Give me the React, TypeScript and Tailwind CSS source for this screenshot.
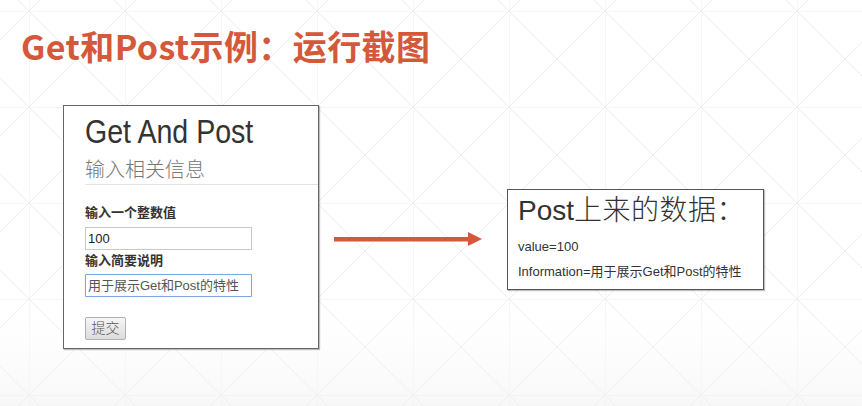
import React from "react";

const sans = { fontFamily: '"Liberation Sans", "Noto Sans CJK SC", Arial, sans-serif' };

function Background() {
  return (
    <svg className="absolute inset-0" width="862" height="406" aria-hidden="true">
      <defs>
        <pattern id="grid" x="29" y="11" width="96" height="96" patternUnits="userSpaceOnUse">
          <path d="M0 0H96M0 0V96M0 0L96 96M96 0L0 96" stroke="#ededed" strokeWidth="1" fill="none" />
        </pattern>
        <linearGradient id="fade" x1="0" y1="0" x2="0" y2="1">
          <stop offset="0" stopColor="#ffffff" stopOpacity="0" />
          <stop offset="1" stopColor="#f2f2f2" stopOpacity="1" />
        </linearGradient>
      </defs>
      <rect width="862" height="406" fill="#ffffff" />
      <rect width="862" height="406" fill="url(#grid)" />
      <rect y="290" width="862" height="116" fill="url(#fade)" opacity="0.6" />
    </svg>
  );
}

function Arrow() {
  return (
    <svg width="148" height="14" viewBox="0 0 148 14" className="shrink-0">
      <rect x="0" y="5" width="136" height="4.5" fill="#d5583c" />
      <polygon points="134,0 148,7 134,14" fill="#d5583c" />
    </svg>
  );
}

export default function App() {
  return (
    <div className="relative w-[862px] h-[406px] overflow-hidden bg-white" style={sans}>
      <Background />
      <div className="relative flex flex-col">
        <h1
          className="mt-[25px] ml-[21px] h-[41px] leading-[41px] text-[34px] font-bold text-[#d4583a] whitespace-nowrap tracking-[0.4px]"
          style={{ fontFamily: '"Noto Sans CJK SC", "Noto Sans", sans-serif' }}
        >
          Get和Post示例：运行截图
        </h1>
        <div className="mt-[39px] flex items-start">
          <div className="ml-[63px] w-[256px] h-[244px] shrink-0 border border-[#666] bg-white shadow-[1px_1px_1px_rgba(0,0,0,0.25)] flex flex-col">
            <div className="mt-[8px] ml-[21px] h-[34px] leading-[34px] text-[34px] text-[#333] whitespace-nowrap origin-left scale-x-[0.84]">
              Get And Post
            </div>
            <div className="mt-[12px] ml-[21px] h-[20px] leading-[20px] text-[20px] font-light text-[#777]">输入相关信息</div>
            <div className="mt-[4px] ml-[21px] h-px bg-[#e3e3e3]" />
            <div className="mt-[21px] ml-[21px] h-[13px] leading-[13px] text-[13px] font-bold text-[#333]">输入一个整数值</div>
            <div className="mt-[8px] ml-[21px] w-[167px] h-[23px] border border-[#c8c8c8] bg-white flex items-center px-[2px] text-[13px] text-[#222]">
              100
            </div>
            <div className="mt-[4px] ml-[21px] h-[13px] leading-[13px] text-[13px] font-bold text-[#333]">输入简要说明</div>
            <div className="mt-[7px] ml-[21px] w-[167px] h-[23px] border border-[#7fa6e0] rounded-[1px] bg-white flex items-center px-[2px] text-[13px] text-[#555] whitespace-nowrap shadow-[0_0_1px_rgba(80,140,230,0.5)]">
              用于展示Get和Post的特性
            </div>
            <div className="mt-[20px] ml-[21px] w-[41px] h-[23px] border border-[#b0b0b0] rounded-[2px] bg-gradient-to-b from-[#f6f6f6] to-[#dcdcdc] flex items-center justify-center text-[14px] font-light text-[#555]">
              提交
            </div>
          </div>
          <div className="ml-[15px] mt-[127px]">
            <Arrow />
          </div>
          <div className="ml-[25px] mt-[84px] w-[257px] h-[101px] shrink-0 border border-[#555] bg-white shadow-[1px_1px_1px_rgba(0,0,0,0.25)] flex flex-col pl-[10px]">
            <div className="mt-[7px] h-[28px] leading-[28px] text-[28px] text-[#333] whitespace-nowrap">
              Post<span className="font-light tracking-[0.5px]">上来的数据：</span>
            </div>
            <div className="mt-[15px] h-[13px] leading-[13px] text-[13px] text-[#333]">value=100</div>
            <div className="mt-[12px] h-[13px] leading-[13px] text-[13px] text-[#333] whitespace-nowrap">Information=用于展示Get和Post的特性</div>
          </div>
        </div>
      </div>
    </div>
  );
}
